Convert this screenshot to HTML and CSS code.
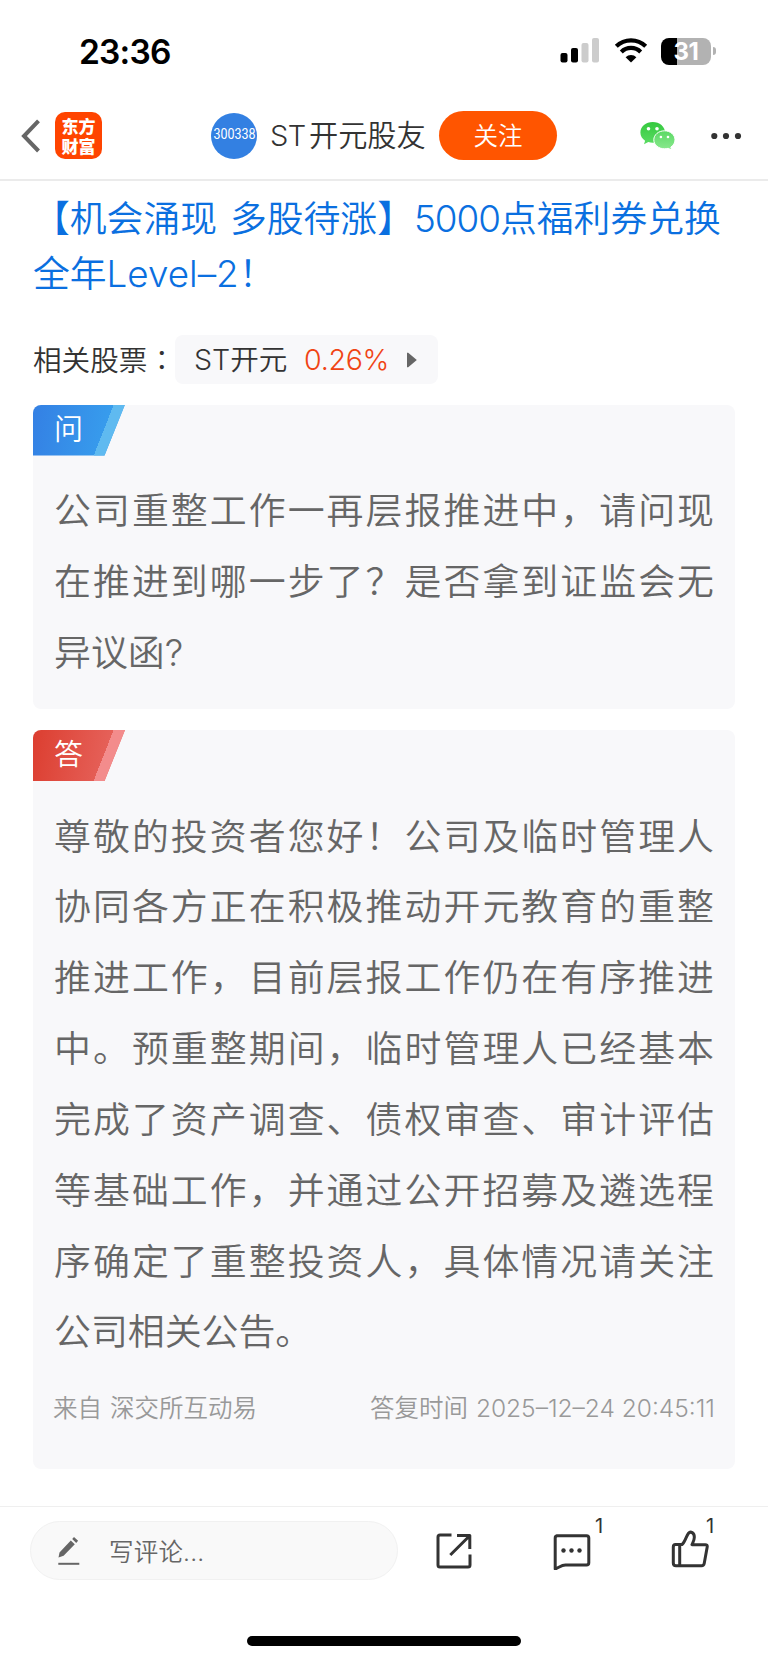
FILE: index.html
```html
<!DOCTYPE html>
<html lang="zh-CN">
<head>
<meta charset="utf-8">
<title>ST开元股友</title>
<link rel="stylesheet" href="styles.css">
</head>
<body>
<div class="page">
  <header class="status">
    <div class="clock">23:36</div>
    <div class="indicators">
      <svg class="signal" width="40" height="26" viewBox="0 0 40 26">
        <rect x="0.5" y="15" width="7" height="9.5" rx="2"/>
        <rect x="11" y="10" width="7" height="14.5" rx="2"/>
        <rect class="faint" x="21.5" y="5" width="7" height="19.5" rx="2"/>
        <rect class="faint" x="32" y="0" width="7" height="24.5" rx="2"/>
      </svg>
      <svg class="wifi" width="34" height="26" viewBox="0 0 34 26">
        <g fill="none" stroke="#000" stroke-width="4.2">
          <path d="M2.3 8.3a21 21 0 0 1 29.4 0"/>
          <path d="M7.3 13.9a13.8 13.8 0 0 1 19.4 0"/>
        </g>
        <path d="M17 24.6l-5.4-5.4a7.8 7.8 0 0 1 10.8 0z"/>
      </svg>
      <div class="battery"><span class="cell">31</span><i class="cap"></i></div>
    </div>
  </header>

  <nav class="nav">
    <svg class="back" width="20" height="36" viewBox="0 0 20 36"><path d="M18.500 2.800L4 18l14.500 15"/></svg>
    <div class="logo"><span>东方<br>财富</span></div>
    <div class="avatar"><span>300338</span></div>
    <div class="name"><span class="st">ST</span>开元股友</div>
    <div class="follow">关注</div>
    <svg class="wechat" width="36" height="30" viewBox="0 0 36 30">
      <defs>
        <linearGradient id="g1" x1="0" y1="0" x2="0" y2="1"><stop offset="0" stop-color="#35c93f"/><stop offset="1" stop-color="#5bdc63"/></linearGradient>
        <linearGradient id="g2" x1="0" y1="0" x2="0" y2="1"><stop offset="0" stop-color="#5bd965"/><stop offset="1" stop-color="#8be98f"/></linearGradient>
      </defs>
      <path fill="url(#g1)" d="M12.8 1C5.9 1 .4 5.6.4 11.5c0 3.400 1.800 6.300 4.700 8.200L4 23.300l4.300-2.200c1.400.4 2.900.6 4.500.6 6.800 0 12.300-4.500 12.300-10.200S19.600 1 12.800 1z"/>
      <path fill="url(#g2)" stroke="#fff" stroke-width="1" d="M24.500 9.800c-6 0-10.700 4-10.700 9s4.700 9 10.700 9c1.300 0 2.500-.2 3.700-.5l3.500 1.800-.9-3c2.600-1.700 4.200-4.300 4.200-7.300 0-5-4.700-9-10.500-9z"/>
      <g fill="#fff"><circle cx="8.500" cy="7.800" r="1.800"/><circle cx="17" cy="7.800" r="1.800"/><circle cx="20.900" cy="16" r="1.300"/><circle cx="28" cy="16" r="1.300"/></g>
    </svg>
    <svg class="more" width="32" height="8" viewBox="0 0 32 8"><circle cx="4.300" cy="4" r="3.100"/><circle cx="16" cy="4" r="3.100"/><circle cx="28" cy="4" r="3.100"/></svg>
  </nav>

  <main class="content">
    <h1 class="promo">
      <span class="row">【机会涌现<i class="sp"> </i>多股待涨】<span class="num">5000</span>点福利券兑换</span>
      <span class="row">全年<span class="lat">Level–2</span>！</span>
    </h1>

    <div class="stocks">
      <span class="label">相关股票<span class="colon" lang="ja">：</span></span>
      <div class="chip">
        <span><span class="lat">ST</span>开元</span>
        <span class="pct">0.26%</span>
        <svg width="10" height="16" viewBox="0 0 10 16"><path d="M0 0.800h1.200L9.800 8 1.200 15.200H0z" fill="#666"/></svg>
      </div>
    </div>

    <section class="card ask">
      <div class="tag"><span>问</span></div>
      <div class="text">
        <p>公司重整工作一再层报推进中，请问现</p>
        <p>在推进到哪一步了？是否拿到证监会无</p>
        <p class="last">异议函<span class="q">?</span></p>
      </div>
    </section>

    <section class="card answer">
      <div class="tag"><span>答</span></div>
      <div class="text">
        <p>尊敬的投资者您好！公司及临时管理人</p>
        <p>协同各方正在积极推动开元教育的重整</p>
        <p>推进工作，目前层报工作仍在有序推进</p>
        <p>中。预重整期间，临时管理人已经基本</p>
        <p>完成了资产调查、债权审查、审计评估</p>
        <p>等基础工作，并通过公开招募及遴选程</p>
        <p>序确定了重整投资人，具体情况请关注</p>
        <p class="last">公司相关公告。</p>
      </div>
      <div class="meta">
        <span>来自<i class="gap"></i>深交所互动易</span>
        <span>答复时间<i class="gap"></i><span class="date">2025–12–24 20:45:11</span></span>
      </div>
    </section>
  </main>

  <footer class="bar">
    <div class="tools">
      <div class="comment">
        <svg width="22" height="30" viewBox="0 0 22 30">
          <path d="M0.500 21.500L1.500 16.500 12.800 4.600l4 3.700L5.600 19.800zM14.200 3.100L16 1.100l4.100 3.700-1.900 2.100z" fill="#666"/>
          <path d="M0.300 27.800h21" stroke="#666" stroke-width="2"/>
        </svg>
        <span>写评论...</span>
      </div>
      <div class="tool">
        <svg width="36" height="36" viewBox="0 0 36 36">
          <path d="M15.500 2H4Q2 2 2 4v28q0 2 2 2h28q2 0 2-2V21.500"/>
          <path d="M21 2.600h12.800V16M33.400 3L14.300 22"/>
        </svg>
      </div>
      <div class="tool">
        <svg width="38" height="36" viewBox="0 0 38 36">
          <path d="M3.500 1.800h30q2.300 0 2.300 2.300v24.600q0 2.300-2.300 2.300H12.500C8.500 31 6 33.500 2.200 35V4q0-2.200 2.300-2.200z"/>
          <g class="dots"><circle cx="10.500" cy="16.500" r="2.200"/><circle cx="18.500" cy="16.500" r="2.200"/><circle cx="26.500" cy="16.500" r="2.200"/></g>
        </svg>
        <span class="count">1</span>
      </div>
      <div class="tool like">
        <svg width="38" height="38" viewBox="0 0 38 38">
          <path d="M4.500 14.500H11C14 12 15.200 6 17.500 3.200c2-2.300 6-.6 5.800 4.300-.1 3-1.300 4.800-2.300 7.200h13.300q2.300 0 1.900 2.300l-3 16.500q-.4 2.200-2.600 2.200H5q-2.700 0-2.700-2.700V17q0-2.500 2.200-2.500zM8.700 14.500v21"/>
        </svg>
        <span class="count">1</span>
      </div>
    </div>
    <div class="home"></div>
  </footer>
</div>
</body>
</html>
```
FILE: styles.css
```css
* { box-sizing: border-box; margin: 0; padding: 0; }
i { font-style: normal; }
svg { display: block; flex: none; }
body {
  background: #fff;
  font-family: Inter, "Noto Sans CJK SC", sans-serif;
  font-weight: 350;
  color: #333;
  text-spacing-trim: space-all;
}
.page { width: 768px; height: 1663px; display: flex; flex-direction: column; overflow: hidden; white-space: nowrap; }

.status { height: 92px; padding: 10px 52px 0 79px; display: flex; align-items: center; justify-content: space-between; }
.clock { font-size: 33.500px; font-weight: 600; color: #000; letter-spacing: -0.800px; padding-top: 1px; }
.indicators { display: flex; align-items: center; }
.signal .faint { fill: #ccc; }
.wifi { margin-left: 14px; }
.battery { display: flex; align-items: center; margin-left: 13px; }
.cell {
  width: 50px; height: 27px; border-radius: 8px;
  background: linear-gradient(90deg, #000 31%, #b2b2b2 31%);
  color: #fff; font-size: 24px; font-weight: 700; line-height: 27px; text-align: center; letter-spacing: -0.5px;
}
.cap { width: 3px; height: 8px; margin-left: 2px; border-radius: 0 4px 4px 0; background: #b2b2b2; }

.nav { height: 89px; flex: none; border-bottom: 2px solid #ebebeb; display: flex; align-items: center; padding-left: 20px; }
.back path { fill: none; stroke: #666; stroke-width: 4; stroke-linecap: butt; }
.logo {
  width: 47px; height: 47px; margin-left: 15px; border-radius: 10px; background: #ff4400; color: #fff;
  display: flex; align-items: center; justify-content: center; text-align: center;
  font: 900 17px/19.500px "Noto Sans CJK SC", sans-serif;
}
.avatar {
  width: 46px; height: 46px; margin-left: 109px; border-radius: 50%; background: #3380e2; color: #fff;
  display: flex; align-items: center; justify-content: center;
}
.avatar span { font: 400 14.500px/20px Roboto, sans-serif; transform: scaleX(0.86); margin-top: -2px; }
.name { width: 155px; margin-left: 13px; font-size: 29.200px; line-height: 40px; padding-top: 1px; }
.st { display: inline-block; width: 39px; font-size: 29px; letter-spacing: -0.500px; }
.follow {
  width: 118px; height: 49px; margin-left: 14px; border-radius: 25px; background: #ff5500; color: #fff;
  font-size: 24.500px; line-height: 50px; text-align: center;
}
.wechat { margin-left: 83px; }
.more { margin-left: 34px; fill: #333; }

.content { height: 1325px; flex: none; padding: 10px 33px 0; }
.promo { font-size: 36.800px; font-weight: 350; line-height: 55px; color: #0a6fe0; }
.row { display: block; }
.sp { display: inline-block; width: 13px; }
.num { letter-spacing: -1px; }
.stocks { display: flex; align-items: center; margin-top: 34px; font-size: 28.600px; line-height: 40px; }
.label { width: 142px; }
.colon { font-family: "Noto Sans CJK JP", sans-serif; }
.chip { width: 263px; height: 49px; padding-left: 19px; border-radius: 8px; background: #f8f8fa; display: flex; align-items: center; }
.chip > span:first-child { width: 110px; }
.pct { width: 103px; color: #f04414; letter-spacing: -0.300px; }

.card { border-radius: 8px; background: #f8f8fa; overflow: hidden; margin-top: 20.500px; }
.ask { height: 304.500px; }
.answer { height: 739px; margin-top: 21px; }
.tag {
  width: 92px; height: 51px; padding-left: 21px; clip-path: polygon(0 0, 100% 0, 71.500px 100%, 0 100%);
  color: #fff; font-size: 29px; line-height: 50px;
}
.ask .tag { background: linear-gradient(111.500deg, transparent 75px, #5fbaf0 75px), linear-gradient(100deg, #3480e4, #38a4ef); }
.answer .tag { background: linear-gradient(111.500deg, transparent 75px, #f38c8c 75px), linear-gradient(100deg, #dc3e30, #e86a64); }
.text { padding: 20.500px 21px 0; font-size: 36.900px; line-height: 70.850px; color: #666; }
.text p { height: 70.850px; text-align: justify; text-align-last: justify; }
.text .last { text-align-last: left; }
.meta { display: flex; justify-content: space-between; padding: 22px 20px 0 20px; font-size: 24.500px; line-height: 36px; color: #999; }
.gap { display: inline-block; width: 8px; }

.bar { height: 157px; border-top: 1px solid #efefef; display: flex; flex-direction: column; align-items: center; }
.tools { width: 768px; height: 87px; padding: 14px 0 0 30px; display: flex; align-items: flex-start; }
.comment {
  flex: none;
  width: 368px; height: 59px; border: 1px solid #f1f1f1; border-radius: 30px; background: #f9f9f9;
  display: flex; align-items: center; padding-left: 27px; color: #666; font-size: 24.500px; margin-right: 38px;
}
.comment span { margin-left: 29px; letter-spacing: 0.200px; }
.tool { position: relative; flex: none; width: 118px; height: 59px; padding-top: 12px; }
.tool svg { fill: none; stroke: #333; stroke-width: 3; stroke-linejoin: round; }
.tool:nth-child(3) svg { margin: 1px 0 0 -1px; }
.tool .dots { fill: #333; stroke: none; }
.like { width: 96px; }
.tool.like svg { margin: -3px 0 0 -1px; }
.count { position: absolute; top: -7px; left: 41px; font-size: 20px; line-height: 24px; font-weight: 400; }
.like .count { left: 34px; }
.home { width: 274px; height: 10px; margin-top: 42px; border-radius: 5px; background: #000; }
```
